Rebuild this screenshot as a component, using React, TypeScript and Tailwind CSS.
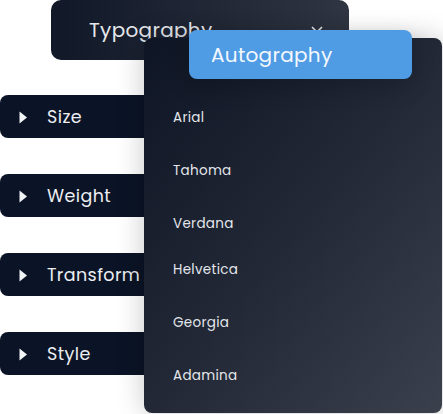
import React from "react";

const sections = ["Size", "Weight", "Transform", "Style"];

const fonts = [
  { name: "Arial", gap: "mt-[70px]" },
  { name: "Tahoma", gap: "mt-[33px]" },
  { name: "Verdana", gap: "mt-[33px]" },
  { name: "Helvetica", gap: "mt-[26px]" },
  { name: "Georgia", gap: "mt-[33px]" },
  { name: "Adamina", gap: "mt-[33px]" },
];

const Caret = () => (
  <svg width="9" height="13" viewBox="0 0 9 13" className="shrink-0">
    <path d="M0.5 0.5 L8 6.5 L0.5 12.5 Z" fill="#f1f3f7" />
  </svg>
);

const App = () => {
  return (
    <div className="relative w-[443px] h-[414px] overflow-hidden bg-white font-['Poppins','Inter','Noto_Sans',sans-serif]">
      {/* select box */}
      <div className="ml-[51px] w-[298px] h-[60px] rounded-[10px] bg-linear-to-r from-[#111828] to-[#2f3542] flex items-center justify-between pl-[38px] pr-[26px] text-[20px] text-[#e6e8ec] tracking-[0.3px]">
        <span>Typography</span>
        <svg width="12" height="8" viewBox="0 0 12 8">
          <path d="M1 1 L6 6 L11 1" stroke="#e6e8ec" strokeWidth="1.6" fill="none" />
        </svg>
      </div>

      {/* left section buttons */}
      <div className="mt-[35px] flex flex-col gap-[36px]">
        {sections.map((s) => (
          <div
            key={s}
            className="w-[160px] h-[43px] rounded-l-[8px] bg-[#0b1426] flex items-center pl-[19px] gap-[19px] pt-[2px] text-[17.5px] text-[#eceef2] tracking-[0.4px]"
          >
            <Caret />
            <span>{s}</span>
          </div>
        ))}
      </div>

      {/* dropdown menu */}
      <div className="absolute left-[144px] top-[38px] w-[298px] h-[375px] rounded-[8px] bg-linear-to-br from-[#0e1524] via-[#222836] to-[#3a404c] shadow-[0_0_28px_rgba(0,0,0,0.22)] pl-[29px] flex flex-col text-[13.5px] text-[#e3e6eb] tracking-[0.3px]">
        {fonts.map((f) => (
          <div key={f.name} className={`${f.gap} h-[20px] leading-[20px]`}>
            {f.name}
          </div>
        ))}
      </div>

      {/* highlighted option */}
      <div className="absolute left-[189px] top-[30px] w-[223px] h-[49px] rounded-[8px] bg-[#4f9ce5] shadow-[0_8px_22px_rgba(0,0,0,0.18)] flex items-center pl-[22px] text-[20px] text-[#f4f8fd] tracking-[0.3px]">
        Autography
      </div>
    </div>
  );
};

export default App;
